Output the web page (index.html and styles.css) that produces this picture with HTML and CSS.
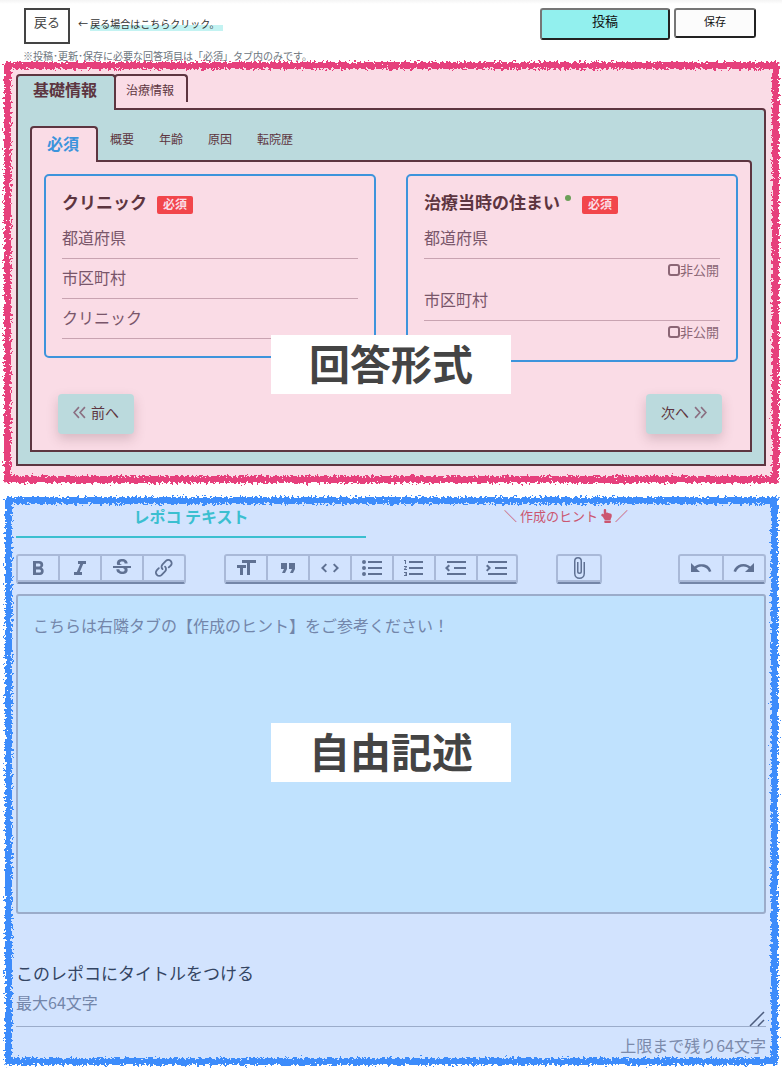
FILE: index.html
```html
<!DOCTYPE html>
<html lang="ja">
<head>
<meta charset="utf-8">
<meta name="viewport" content="width=device-width, initial-scale=1">
<title>レポコ 投稿</title>
<link rel="stylesheet" href="styles.css">
</head>
<body>
<svg class="defs" aria-hidden="true">
  <filter id="chalk" x="-2%" y="-2%" width="104%" height="104%">
    <feTurbulence type="fractalNoise" baseFrequency="0.4" numOctaves="3" seed="7" result="noise"/>
    <feDisplacementMap in="SourceGraphic" in2="noise" scale="8" xChannelSelector="R" yChannelSelector="G"/>
  </filter>
</svg>

<header class="header">
  <div class="header-row">
    <button class="back" type="button">戻る</button>
    <p class="back-hint">← <span class="marker">戻る場合はこちらクリック。</span></p>
    <div class="actions">
      <button class="action post" type="button">投稿</button>
      <button class="action save" type="button">保存</button>
    </div>
  </div>
  <p class="note">※投稿･更新･保存に必要な回答項目は「必須」タブ内のみです。</p>
</header>

<main>
<section class="area answers">
  <div class="frame frame-pink"></div>
  <nav class="tabs">
    <button class="tab tab-current" type="button">基礎情報</button>
    <button class="tab tab-other" type="button">治療情報</button>
  </nav>
  <div class="panel">
    <nav class="tabs">
      <button class="tab subtab-current" type="button">必須</button>
      <div class="subtabs">
        <button class="subtab" type="button">概要</button>
        <button class="subtab" type="button">年齢</button>
        <button class="subtab" type="button">原因</button>
        <button class="subtab" type="button">転院歴</button>
      </div>
    </nav>
    <div class="subpanel">
      <div class="cards">
        <div class="card">
          <h2 class="card-title">クリニック<span class="badge">必須</span></h2>
          <input class="field" type="text" aria-label="都道府県" placeholder="都道府県">
          <input class="field" type="text" aria-label="市区町村" placeholder="市区町村">
          <input class="field" type="text" aria-label="クリニック" placeholder="クリニック">
        </div>
        <div class="card">
          <h2 class="card-title">治療当時の住まい<span class="dot"></span><span class="badge">必須</span></h2>
          <input class="field" type="text" aria-label="都道府県" placeholder="都道府県">
          <label class="private"><input class="check" type="checkbox">非公開</label>
          <input class="field" type="text" aria-label="市区町村" placeholder="市区町村">
          <label class="private"><input class="check" type="checkbox">非公開</label>
        </div>
      </div>
      <div class="pager">
        <button class="page" type="button">
          <svg class="chevrons" viewBox="0 0 12 12"><path d="M5.500 1L1 6l4.500 5M11 1L6.500 6l4.500 5"/></svg>前へ
        </button>
        <button class="page" type="button">次へ
          <svg class="chevrons" viewBox="0 0 12 12"><path d="M1 1l4.500 5L1 11M6.500 1L11 6l-4.500 5"/></svg>
        </button>
      </div>
    </div>
  </div>
  <strong class="caption caption-answers">回答形式</strong>
</section>

<section class="area free">
  <div class="frame frame-blue"></div>
  <nav class="modes">
    <button class="mode mode-current" type="button">レポコ テキスト</button>
    <button class="mode mode-hint" type="button">＼ 作成のヒント
      <svg class="hand" viewBox="0 0 384 512"><path d="M135.652 0c23.625 0 43.826 20.650 43.826 44.800v99.851c17.048-16.340 49.766-18.346 70.944 6.299 22.829-14.288 53.017-2.147 62.315 16.450C361.878 158.426 384 189.346 384 240c0 2.746-.203 13.276-.195 16 .168 61.971-31.065 76.894-38.315 123.731C343.683 391.404 333.599 400 321.786 400H150.261c-18.366-.011-35.889-10.607-43.845-28.464C93.421 342.648 57.377 276.122 29.092 264 10.897 256.203.008 242.616 0 224c-.014-34.222 35.098-57.752 66.908-44.119 8.359 3.583 16.670 8.312 24.918 14.153V44.800c0-23.450 20.543-44.800 43.826-44.800zM136 416h192c13.255 0 24 10.745 24 24v48c0 13.255-10.745 24-24 24H136c-13.255 0-24-10.745-24-24v-48c0-13.255 10.745-24 24-24z"/></svg>
      ／</button>
  </nav>

  <div class="toolbar">
    <div class="group group-format">
      <button class="tool" type="button" aria-label="太字"><svg viewBox="0 0 24 24"><path d="M15.600 11.800c1-.7 1.600-1.800 1.600-2.800a4 4 0 0 0-4-4H7v14h7c2.100 0 3.700-1.700 3.700-3.800 0-1.500-.8-2.800-2.100-3.400zM10 7.500h3a1.500 1.500 0 1 1 0 3h-3v-3zm3.500 9H10v-3h3.500a1.500 1.500 0 1 1 0 3z"/></svg></button>
      <button class="tool" type="button" aria-label="斜体"><svg viewBox="0 0 24 24"><path d="M10 5v3h2.200l-3.400 8H6v3h8v-3h-2.200l3.400-8H18V5h-8z"/></svg></button>
      <button class="tool" type="button" aria-label="取り消し線"><svg viewBox="0 0 24 24"><path d="M7.240 8.750c-.26-.48-.39-1.030-.39-1.670 0-.61.13-1.160.4-1.670.26-.5.63-.93 1.110-1.290.48-.35 1.050-.63 1.700-.83.66-.19 1.390-.29 2.180-.29.81 0 1.540.11 2.210.34.66.22 1.230.54 1.690.94.47.4.83.88 1.080 1.430.25.55.38 1.150.38 1.810h-3.010c0-.31-.05-.59-.15-.85-.09-.27-.24-.49-.44-.68-.2-.19-.45-.33-.75-.44-.3-.1-.66-.16-1.060-.16-.39 0-.74.04-1.030.13-.29.09-.53.21-.72.36-.19.16-.34.34-.44.55-.1.21-.15.43-.15.66 0 .48.25.88.74 1.210.38.25.77.48 1.410.7H7.390c-.05-.08-.11-.17-.15-.25zM21 12v-2H3v2h9.620c.18.07.4.14.55.2.37.17.66.34.87.51.21.17.35.36.43.57.07.2.11.43.11.69 0 .23-.05.45-.14.66-.09.2-.23.38-.42.53-.19.15-.42.26-.71.35-.29.08-.63.13-1.010.13-.43 0-.83-.04-1.180-.13s-.66-.23-.91-.42c-.25-.19-.45-.44-.59-.75-.14-.31-.25-.76-.25-1.210H6.400c0 .55.08 1.130.24 1.580.16.45.37.85.65 1.210.28.35.6.66.98.92.37.26.78.48 1.220.65.44.17.9.3 1.380.39.48.08.96.13 1.440.13.8 0 1.530-.09 2.180-.28s1.210-.45 1.670-.79c.46-.34.82-.77 1.070-1.270s.38-1.070.38-1.710c0-.6-.1-1.140-.31-1.610-.05-.11-.11-.23-.17-.33H21z"/></svg></button>
      <button class="tool" type="button" aria-label="リンク"><svg viewBox="0 0 24 24"><path d="M9.880 13.700a4.300 4.300 0 0 1 0-6.070l3.370-3.370a4.260 4.260 0 0 1 6.070 0 4.300 4.300 0 0 1 0 6.060l-1.960 1.720a.91.91 0 1 1-1.300-1.300l1.970-1.710a2.460 2.460 0 0 0-3.480-3.480l-3.380 3.370a2.460 2.460 0 0 0 0 3.480.91.91 0 1 1-1.300 1.300z"/><path d="M4.250 19.460a4.300 4.300 0 0 1 0-6.070l1.930-1.900a.91.91 0 1 1 1.300 1.300l-1.930 1.900a2.460 2.460 0 0 0 3.480 3.480l3.370-3.380c.96-.96.96-2.520 0-3.480a.91.91 0 1 1 1.300-1.300 4.300 4.300 0 0 1 0 6.070l-3.380 3.380a4.260 4.260 0 0 1-6.070 0z"/></svg></button>
    </div>
    <div class="group group-block">
      <button class="tool" type="button" aria-label="見出し"><svg viewBox="0 0 24 24"><path d="M12 9v3H9v7H6v-7H3V9h9zM8 4h14v3h-6v12h-3V7H8V4z"/></svg></button>
      <button class="tool" type="button" aria-label="引用"><svg viewBox="0 0 24 24"><path d="M6 17h3l2-4V7H5v6h3l-2 4zm8 0h3l2-4V7h-6v6h3l-2 4z"/></svg></button>
      <button class="tool" type="button" aria-label="コード"><svg viewBox="0 0 24 24"><path d="M18.200 12L15 15.200l1.400 1.400L21 12l-4.600-4.600L15 8.800l3.200 3.200zM5.800 12L9 8.800 7.600 7.400 3 12l4.600 4.600L9 15.200 5.800 12z"/></svg></button>
      <button class="tool" type="button" aria-label="箇条書き"><svg viewBox="0 0 24 24"><path d="M4 4a2 2 0 1 0 0 4 2 2 0 0 0 0-4zm0 6a2 2 0 1 0 0 4 2 2 0 0 0 0-4zm0 6a2 2 0 1 0 0 4 2 2 0 0 0 0-4zm4 3h14v-2H8v2zm0-6h14v-2H8v2zm0-8v2h14V5H8z"/></svg></button>
      <button class="tool" type="button" aria-label="番号付きリスト"><svg viewBox="0 0 24 24"><path d="M2 17h2v.5H3v1h1v.5H2v1h3v-4H2v1zm1-9h1V4H2v1h1v3zm-1 3h1.800L2 13.100v.9h3v-1H3.200L5 10.900V10H2v1zm5-6v2h14V5H7zm0 14h14v-2H7v2zm0-6h14v-2H7v2z"/></svg></button>
      <button class="tool" type="button" aria-label="インデント解除"><svg viewBox="0 0 24 24"><path d="M3 19h19v-2H3v2zm7-6h12v-2H10v2zm-8.300-.3l2.800 2.900L6 14.200 4 12l2-2-1.400-1.500L1 12l.7.7zM3 5v2h19V5H3z"/></svg></button>
      <button class="tool" type="button" aria-label="インデント"><svg viewBox="0 0 24 24"><path d="M3 19h19v-2H3v2zm7-6h12v-2H10v2zm-6.900-1L1 14.200l1.400 1.400L6 12l-.7-.7-2.800-2.800L1 9.900 3.100 12zM3 5v2h19V5H3z"/></svg></button>
    </div>
    <div class="group">
      <button class="tool" type="button" aria-label="ファイル添付"><svg viewBox="0 0 24 24"><path d="M16.500 6v11.500a4 4 0 1 1-8 0V5a2.500 2.500 0 0 1 5 0v10.500a1 1 0 1 1-2 0V6H10v9.500a2.500 2.500 0 0 0 5 0V5a4 4 0 1 0-8 0v12.500a5.500 5.500 0 0 0 11 0V6h-1.500z"/></svg></button>
    </div>
    <div class="group group-end">
      <button class="tool" type="button" aria-label="元に戻す"><svg viewBox="0 0 24 24"><path d="M12.500 8c-2.600 0-5 1-6.900 2.600L2 7v9h9l-3.600-3.600A8 8 0 0 1 20 16l2.400-.8a10.500 10.500 0 0 0-10-7.200z"/></svg></button>
      <button class="tool" type="button" aria-label="やり直す"><svg viewBox="0 0 24 24"><path d="M18.400 10.600a10.500 10.500 0 0 0-16.900 4.600L4 16a8 8 0 0 1 12.700-3.600L13 16h9V7l-3.600 3.600z"/></svg></button>
    </div>
  </div>

  <textarea class="editor" aria-label="レポコ テキスト" placeholder="こちらは右隣タブの【作成のヒント】をご参考ください！"></textarea>

  <label class="title-label" for="title">このレポコにタイトルをつける</label>
  <div class="title-box">
    <textarea class="title-input" id="title" rows="1" maxlength="64" placeholder="最大64文字"></textarea>
    <svg class="grip" viewBox="0 0 16 16"><path d="M1 15L15 1M9 15l6-6"/></svg>
  </div>
  <p class="counter">上限まで残り64文字</p>
  <strong class="caption caption-free">自由記述</strong>
</section>
</main>
</body>
</html>
```

FILE: styles.css
```css
* {
  box-sizing: border-box;
}

body {
  margin: 0;
  background: #fff;
  color: #444;
  font-family: "Noto Sans CJK JP", "Noto Sans", sans-serif;
  font-size: 16px;
  line-height: 24px;
}

button,
input,
textarea {
  font-family: inherit;
  margin: 0;
}

button {
  padding: 0;
  border: 0;
  background: none;
  color: inherit;
}

p,
h2 {
  margin: 0;
}

.defs {
  position: absolute;
  width: 0;
  height: 0;
}

/* Header */

.header {
  padding: 8px 26px 0 23px;
  background: linear-gradient(#f4f4f4, #fff 4px);
}

.header-row {
  display: flex;
  align-items: flex-start;
  padding-left: 1px;
}

.back {
  width: 46px;
  height: 36px;
  padding-bottom: 9px;
  border: 2px solid #444;
  background: #fff;
  font-size: 13px;
}

.back-hint {
  margin: 8px 0 0 8px;
  font-size: 10px;
  line-height: 16px;
  color: #333;
}

.marker {
  padding-right: 4px;
  background: linear-gradient(transparent 60%, #c3f3f2 60%);
}

.actions {
  display: flex;
  align-items: flex-start;
  gap: 4px;
  margin-left: auto;
}

.action {
  border: 2px solid;
  border-color: #767676 #222 #222 #767676;
  border-radius: 3px;
  color: #111;
}

.post {
  width: 130px;
  height: 32px;
  padding-bottom: 8px;
  background: #92f0ee;
  font-size: 13px;
}

.save {
  width: 82px;
  height: 30px;
  padding-bottom: 4px;
  background: #fcfcfc;
  font-size: 11px;
}

.note {
  margin-top: 6px;
  font-size: 10px;
  line-height: 12px;
  color: #6c757d;
}

/* Framed areas */

.area {
  position: relative;
  z-index: 0;
  padding: 0 16px;
}

.frame {
  position: absolute;
  z-index: -1;
  border: 7px solid;
  border-radius: 2px;
  filter: url(#chalk);
}

.frame-pink {
  inset: 0 3px 1px 4px;
  border-color: #e63f7b;
  background: #fadce6;
}

.frame-blue {
  inset: 1px 4px 1px 5px;
  border-color: #3e8cfb;
  background: #d2e3fe;
}

.caption {
  position: absolute;
  left: 50%;
  width: 240px;
  padding-bottom: 4px;
  transform: translateX(-50%);
  background: #fff;
  color: #444;
  font-size: 41px;
  line-height: 55px;
  text-align: center;
}

.caption-answers {
  top: 273px;
}

.caption-free {
  top: 227px;
}

/* Answers */

.answers {
  padding-top: 12px;
  padding-bottom: 18px;
  color: #5d3540;
}

.tabs {
  display: flex;
  align-items: flex-start;
}

.tab {
  border: 2px solid #5d3540;
  border-bottom: 0;
  border-radius: 4px 4px 0 0;
}

.tab-current {
  position: relative;
  width: 100px;
  height: 36px;
  margin-bottom: -2px;
  padding: 0 2px 8px 0;
  background: #bbdadd;
  font-size: 16px;
  font-weight: 700;
}

.tab-other {
  width: 74px;
  height: 28px;
  margin-left: -2px;
  padding: 0 2px 0 0;
  font-size: 12px;
}

.panel {
  padding: 16px 12px 12px;
  border: 2px solid #5d3540;
  border-radius: 0 4px 0 0;
  background: #bbdadd;
}

.subtab-current {
  position: relative;
  width: 68px;
  height: 36px;
  margin-bottom: -2px;
  padding: 0 2px 4px 0;
  background: #fadce6;
  color: #3d94dc;
  font-size: 16px;
  font-weight: 700;
}

.subtabs {
  display: flex;
  gap: 25px;
  padding: 4px 12px 0;
}

.subtab {
  font-size: 12px;
  line-height: 18px;
}

.subpanel {
  padding: 12px 12px 16px;
  border: 2px solid #5d3540;
  border-radius: 0 4px 0 0;
  background: #fadce6;
}

.cards {
  display: grid;
  grid-template-columns: 1fr 1fr;
  align-items: start;
  gap: 30px;
}

.card {
  display: flex;
  flex-direction: column;
  padding: 16px 16px 17px;
  border: 2px solid #3d94dc;
  border-radius: 5px;
}

.card-title {
  display: flex;
  height: 20px;
  margin-bottom: 7px;
  font-size: 17px;
  line-height: 20px;
}

.dot {
  width: 6px;
  height: 6px;
  margin: 3px 1px 0 5px;
  border-radius: 50%;
  background: #6b9f58;
}

.badge {
  height: 18px;
  margin: 4px 0 0 10px;
  padding: 0 6px;
  border-radius: 2px;
  background: #f2464b;
  color: #fadce6;
  font-size: 12px;
  line-height: 15px;
}

.field {
  width: 100%;
  height: 40px;
  padding: 0 0 3px;
  border: 0;
  border-bottom: 1px solid #c8a3b1;
  border-radius: 0;
  background: none;
  color: #5d3540;
  font-size: 16px;
}

.field::placeholder {
  color: #79566a;
  opacity: 1;
}

.private {
  display: flex;
  align-items: center;
  align-self: flex-end;
  height: 22px;
  padding-right: 1px;
  font-size: 13px;
  color: #8b6675;
}

.check {
  width: 12px;
  height: 12px;
  appearance: none;
  border: 2px solid #8b6675;
  border-radius: 3px;
}

.pager {
  display: flex;
  justify-content: space-between;
  margin-top: 32px;
  padding: 0 16px 0 14px;
}

.page {
  display: flex;
  align-items: center;
  justify-content: center;
  gap: 5px;
  width: 76px;
  height: 40px;
  padding-bottom: 4px;
  border-radius: 4px;
  background: #bbdadd;
  box-shadow: 0 5px 12px rgba(93, 53, 64, 0.22);
  font-size: 14px;
}

.chevrons {
  width: 13px;
  height: 13px;
  fill: none;
  stroke: #8b7082;
  stroke-width: 1.500;
}

/* Free text */

.free {
  margin-top: 12px;
  margin-bottom: 2px;
  padding-top: 8px;
  padding-bottom: 8px;
}

.modes {
  display: flex;
}

.mode {
  height: 34px;
  padding-bottom: 10px;
  border-bottom: 2px solid transparent;
}

.mode-current {
  flex: 7;
  border-color: #3bbfd0;
  color: #3bbfd0;
  font-size: 16px;
  font-weight: 700;
}

.mode-hint {
  display: flex;
  flex: 8;
  align-items: center;
  justify-content: center;
  gap: 3px;
  color: #cb5670;
  font-size: 13px;
}

.hand {
  width: 11px;
  height: 14px;
  margin-top: 2px;
  fill: #cb5670;
}

.toolbar {
  display: flex;
  gap: 38px;
  margin-top: 16px;
}

.group {
  display: flex;
  border: 2px solid #a9b9d8;
  border-bottom-color: #7486a8;
  border-radius: 3px;
}

.group-end {
  margin-left: auto;
}

.tool {
  display: flex;
  align-items: center;
  justify-content: center;
  width: 42px;
  height: 26px;
  border-bottom: 2px solid #a9b9d8;
}

.group-format .tool:first-child,
.group-block .tool:first-child,
.group-block .tool:last-child {
  width: 40px;
}

.tool + .tool {
  border-left: 2px solid #a9b9d8;
}

.tool svg {
  flex: none;
  width: 24px;
  height: 24px;
  fill: #5f7193;
}

.editor {
  display: block;
  width: 100%;
  height: 320px;
  margin-top: 10px;
  padding: 17px 15px;
  border: 2px solid #9bacca;
  border-radius: 3px;
  background: #c0e2fe;
  color: #344563;
  font-size: 16px;
  line-height: 24px;
  resize: none;
}

.editor::placeholder,
.title-input::placeholder {
  color: #7386aa;
  opacity: 1;
}

.title-label {
  display: block;
  margin-top: 47px;
  color: #344563;
  font-size: 17px;
}

.title-box {
  position: relative;
}

.title-input {
  display: block;
  width: 100%;
  height: 42px;
  padding: 5px 0 12px;
  border: 0;
  border-bottom: 1px solid #9bacca;
  background: none;
  color: #344563;
  font-size: 16px;
  line-height: 24px;
  resize: none;
}

.grip {
  position: absolute;
  right: 1px;
  bottom: 0;
  width: 16px;
  height: 16px;
  fill: none;
  stroke: #4d5d7e;
  stroke-width: 1.500;
}

.counter {
  margin-top: 6px;
  margin-bottom: 1px;
  color: #7b8aab;
  text-align: right;
}
```
